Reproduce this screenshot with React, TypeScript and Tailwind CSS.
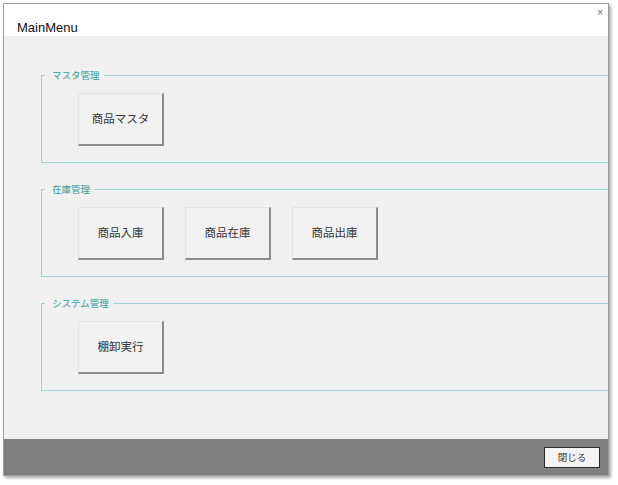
import React from "react";

const jp = "font-['Noto_Sans_CJK_JP','Liberation_Sans',sans-serif]";

const MenuButton: React.FC<{ label: string }> = ({ label }) => (
  <button
    className={`w-[86px] h-[53px] bg-[#f1f1f1] border-t border-l border-[#e4e4e4] border-r-2 border-b-2 border-r-[#8c8c8c] border-b-[#8c8c8c] text-[11.5px] text-[#333] ${jp}`}
  >
    {label}
  </button>
);

const Group: React.FC<{ title: string; items: string[] }> = ({ title, items }) => (
  <div className="relative ml-[37px] w-[600px] border border-[#9fd4d6]">
    {/* frame caption sits over the top border */}
    <span
      className={`absolute left-[3px] -top-[7px] bg-[#f0f0f0] pl-[7px] pr-[4px] text-[9.5px] leading-[12px] text-[#2f9c9c] ${jp}`}
    >
      {title}
    </span>
    <div className="flex gap-[21px] pt-[17px] pb-[16px] pl-[36px]">
      {items.map((item) => (
        <MenuButton key={item} label={item} />
      ))}
    </div>
  </div>
);

export default function App() {
  return (
    <div className="w-[618px] h-[485px] bg-white pl-[3px] pt-[3px]">
      {/* window */}
      <div className="w-[606px] h-[473px] flex flex-col border border-[#9c9c9c] shadow-[2px_2px_3px_rgba(0,0,0,0.35)]">
        {/* title bar */}
        <div className="h-[32px] bg-white flex items-start justify-between pl-[13px] pr-[5px]">
          <span className="pt-[16px] text-[13px] leading-[16px] text-[#111] font-['Liberation_Sans',sans-serif]">
            MainMenu
          </span>
          <span className="pt-[3px] text-[10px] leading-[12px] text-[#666] font-['Liberation_Sans',sans-serif]">
            ×
          </span>
        </div>

        {/* body */}
        <div className="flex-1 bg-[#f0f0f0] overflow-hidden pt-[39px] flex flex-col gap-[26px]">
          <Group title="マスタ管理" items={["商品マスタ"]} />
          <Group title="在庫管理" items={["商品入庫", "商品在庫", "商品出庫"]} />
          <Group title="システム管理" items={["棚卸実行"]} />
        </div>

        {/* footer */}
        <div className="h-[36px] bg-[#808080] flex justify-end items-start pt-[8px] pr-[8px]">
          <button
            className={`w-[56px] h-[21px] bg-[#f4f4f4] border border-[#2e2e2e] text-[9.5px] text-[#333] ${jp}`}
          >
            閉じる
          </button>
        </div>
      </div>
    </div>
  );
}
